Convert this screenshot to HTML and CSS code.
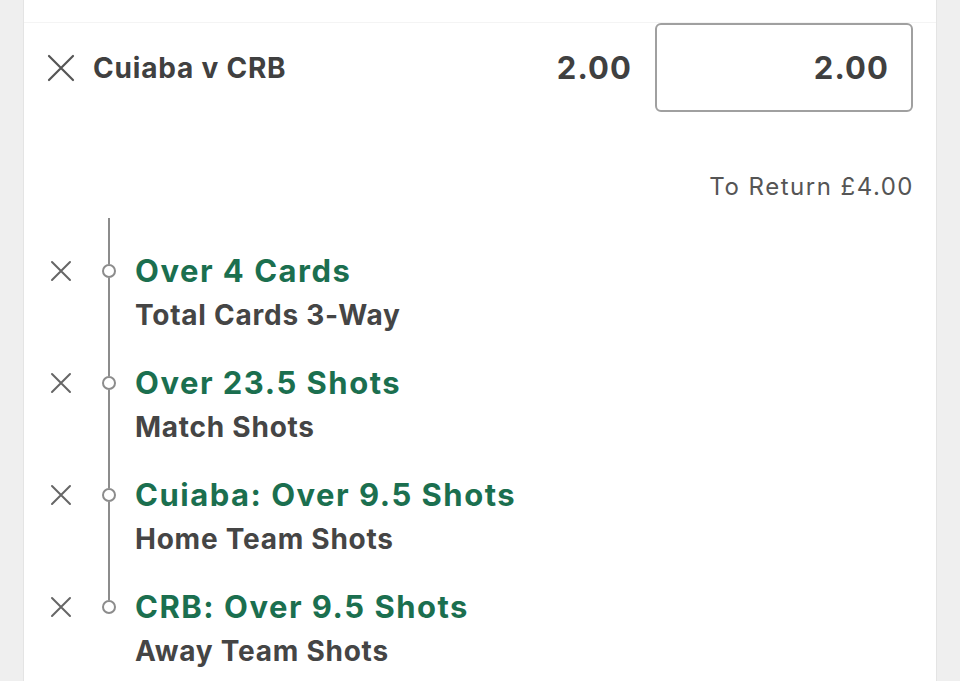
FILE: index.html
```html
<!DOCTYPE html>
<html>
<head>
<meta charset="utf-8">
<link rel="stylesheet" href="styles.css">
</head>
<body>
<div class="card">
  <div class="top-strip"></div>
  <div class="bet-row">
    <svg class="x-big" viewBox="0 0 28 28" width="28" height="28"><path d="M2 2 L26 26 M26 2 L2 26" stroke="#555" stroke-width="2.2" stroke-linecap="round"/></svg>
    <div class="bet-title">Cuiaba v CRB</div>
    <div class="odds">2.00</div>
    <div class="stake">2.00</div>
  </div>
  <div class="to-return">To Return £4.00</div>
  <div class="legs">
    <div class="leg">
      <div class="leg-x"><svg viewBox="0 0 22 22" width="22" height="22"><path d="M2 2 L20 20 M20 2 L2 20" stroke="#666" stroke-width="2" stroke-linecap="round"/></svg></div>
      <div class="rail"><span class="seg-top first"></span><span class="dot"></span><span class="seg-bottom"></span></div>
      <div class="leg-text"><div class="leg-sel">Over 4 Cards</div><div class="leg-mkt">Total Cards 3-Way</div></div>
    </div>
    <div class="leg">
      <div class="leg-x"><svg viewBox="0 0 22 22" width="22" height="22"><path d="M2 2 L20 20 M20 2 L2 20" stroke="#666" stroke-width="2" stroke-linecap="round"/></svg></div>
      <div class="rail"><span class="seg-top"></span><span class="dot"></span><span class="seg-bottom"></span></div>
      <div class="leg-text"><div class="leg-sel">Over 23.5 Shots</div><div class="leg-mkt">Match Shots</div></div>
    </div>
    <div class="leg">
      <div class="leg-x"><svg viewBox="0 0 22 22" width="22" height="22"><path d="M2 2 L20 20 M20 2 L2 20" stroke="#666" stroke-width="2" stroke-linecap="round"/></svg></div>
      <div class="rail"><span class="seg-top"></span><span class="dot"></span><span class="seg-bottom"></span></div>
      <div class="leg-text"><div class="leg-sel">Cuiaba: Over 9.5 Shots</div><div class="leg-mkt">Home Team Shots</div></div>
    </div>
    <div class="leg">
      <div class="leg-x"><svg viewBox="0 0 22 22" width="22" height="22"><path d="M2 2 L20 20 M20 2 L2 20" stroke="#666" stroke-width="2" stroke-linecap="round"/></svg></div>
      <div class="rail"><span class="seg-top"></span><span class="dot"></span><span class="seg-bottom last"></span></div>
      <div class="leg-text"><div class="leg-sel">CRB: Over 9.5 Shots</div><div class="leg-mkt">Away Team Shots</div></div>
    </div>
  </div>
</div>
</body>
</html>
```

FILE: styles.css
```css
html, body {
  margin: 0;
  padding: 0;
  height: 100%;
  overflow: hidden;
}
body {
  background: #efefef;
  font-family: Inter, "Noto Sans", "Liberation Sans", sans-serif;
}
.card {
  margin: 0 23px 0 23px;
  height: 681px;
  background: #fff;
  border-left: 1px solid #e4e4e4;
  border-right: 1px solid #e4e4e4;
  overflow: hidden;
}
.top-strip {
  height: 22px;
  border-bottom: 1px solid #f4f4f4;
}
.bet-row {
  display: flex;
  align-items: center;
  height: 89px;
  padding: 0 23px 0 23px;
}
.x-big {
  flex: none;
  margin-right: 18px;
}
.bet-title {
  flex: 1;
  font-size: 28px;
  letter-spacing: 0.8px;
  font-weight: 700;
  color: #404040;
}
.odds {
  font-size: 31px;
  letter-spacing: 1.1px;
  font-weight: 700;
  color: #404040;
  margin-right: 23px;
}
.stake {
  box-sizing: border-box;
  width: 258px;
  height: 89px;
  border: 2px solid #a0a0a0;
  border-radius: 6px;
  display: flex;
  align-items: center;
  justify-content: flex-end;
  padding-right: 22px;
  font-size: 31px;
  letter-spacing: 1.1px;
  font-weight: 700;
  color: #404040;
}
.to-return {
  box-sizing: border-box;
  height: 106px;
  padding: 60px 22px 0 0;
  line-height: 30px;
  text-align: right;
  font-size: 24px;
  letter-spacing: 1.5px;
  color: #555;
}
.leg {
  display: grid;
  grid-template-columns: 74px 21px 1fr;
  height: 112px;
}
.leg-x {
  display: flex;
  justify-content: center;
  padding-top: 42px;
}
.leg-x svg { display: block; }
.rail {
  display: flex;
  flex-direction: column;
  align-items: center;
}
.seg-top {
  width: 2px;
  height: 46px;
  background: #8c8c8c;
}
.seg-bottom {
  width: 2px;
  flex: 1;
  background: #8c8c8c;
}
.seg-bottom.last {
  background: transparent;
}
.dot {
  box-sizing: border-box;
  width: 14px;
  height: 14px;
  border: 2px solid #8c8c8c;
  border-radius: 50%;
  background: #fff;
}
.leg-text {
  padding: 31px 0 0 16px;
}
.leg-sel {
  line-height: 44px;
  font-size: 31px;
  letter-spacing: 1.5px;
  font-weight: 700;
  color: #1b6f4f;
  white-space: nowrap;
}
.leg-mkt {
  line-height: 44px;
  font-size: 28px;
  letter-spacing: 0.75px;
  font-weight: 700;
  color: #454545;
  white-space: nowrap;
}
```
